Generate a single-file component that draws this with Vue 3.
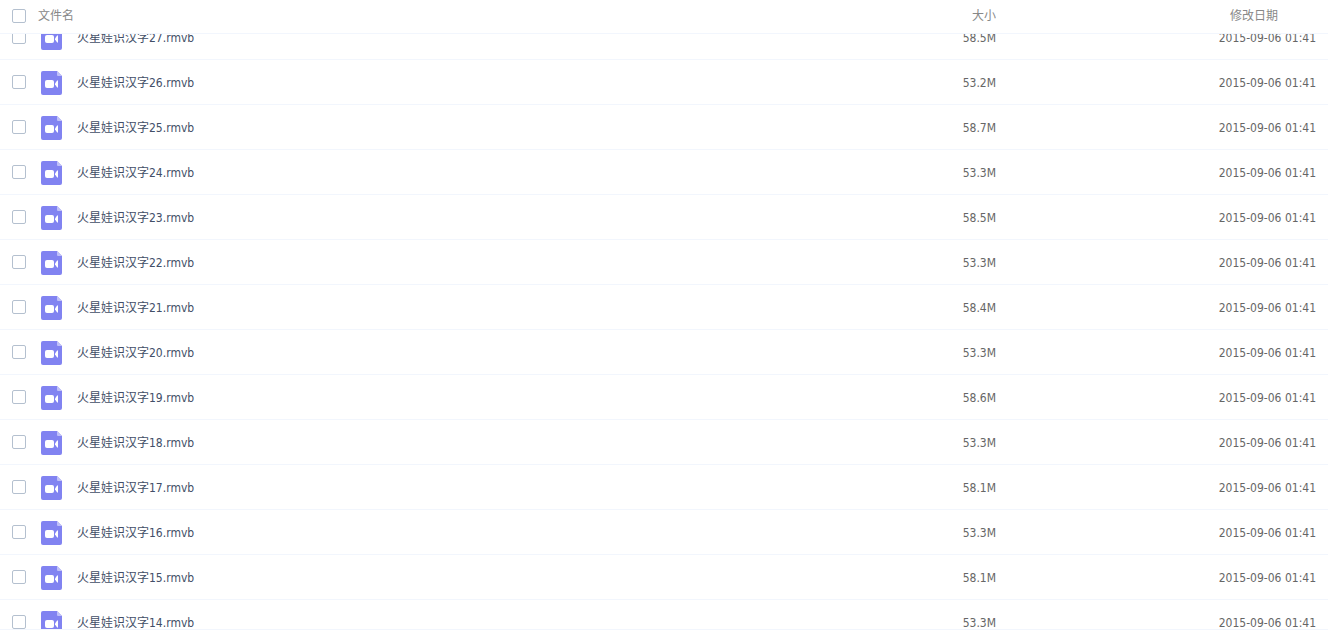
<script setup>
import { onMounted, ref } from 'vue'

const sizes = [
  [27, '58.5M'],
  [26, '53.2M'],
  [25, '58.7M'],
  [24, '53.3M'],
  [23, '58.5M'],
  [22, '53.3M'],
  [21, '58.4M'],
  [20, '53.3M'],
  [19, '58.6M'],
  [18, '53.3M'],
  [17, '58.1M'],
  [16, '53.3M'],
  [15, '58.1M'],
  [14, '53.3M'],
]

const files = sizes.map(([n, size]) => ({
  name: `火星娃识汉字${n}.rmvb`,
  size,
  date: '2015-09-06 01:41',
}))

const selected = ref([])
const scroller = ref(null)

function toggleAll(event) {
  selected.value = event.target.checked ? files.map((f) => f.name) : []
}

onMounted(() => {
  scroller.value.scrollTop = 19
})
</script>

<template>
  <main ref="scroller" class="file-list">
    <table class="files">
      <thead>
        <tr>
          <th class="col-check">
            <input
              type="checkbox"
              class="check"
              aria-label="全选"
              :checked="selected.length === files.length"
              @change="toggleAll"
            />
          </th>
          <th class="col-name" scope="col">文件名</th>
          <th class="col-size" scope="col">大小</th>
          <th class="col-date" scope="col">修改日期</th>
        </tr>
      </thead>
      <tbody>
        <tr v-for="file in files" :key="file.name">
          <td class="col-check">
            <input
              v-model="selected"
              type="checkbox"
              class="check"
              :value="file.name"
              :aria-label="file.name"
            />
          </td>
          <td class="col-name">
            <div class="entry">
              <svg class="icon" viewBox="0 0 21 24" aria-hidden="true">
                <path d="M2 0h14l5 5v17a2 2 0 0 1-2 2H2a2 2 0 0 1-2-2V2a2 2 0 0 1 2-2z" fill="#8183f1" />
                <path d="M16 0l5 5h-4a1 1 0 0 1-1-1z" fill="#c0c1f8" />
                <rect x="4" y="9" width="9" height="8" rx="2" fill="#fff" />
                <path d="M14 12.4l2-2.6q1-1 1 .2v6q0 1.200-1 .2l-2-2.600z" fill="#fff" />
              </svg>
              <a href="#" @click.prevent>{{ file.name }}</a>
            </div>
          </td>
          <td class="col-size">{{ file.size }}</td>
          <td class="col-date">{{ file.date }}</td>
        </tr>
      </tbody>
    </table>
  </main>
</template>

<style>
body {
  margin: 0;
  background: #fff;
}
</style>

<style scoped>
.file-list {
  box-sizing: border-box;
  height: 100vh;
  overflow-y: auto;
  scrollbar-width: none;
  border-bottom: 1px solid #f2f6fd;
  background: #fff;
  color: #666;
  font: 12px/16px 'DejaVu Sans Condensed', 'Noto Sans CJK SC', sans-serif;
}

.files {
  width: 100%;
  table-layout: fixed;
  border-collapse: separate;
  border-spacing: 0;
}

th {
  position: sticky;
  top: 0;
  z-index: 1;
  box-sizing: border-box;
  height: 34px;
  padding: 0 0 2px;
  border-bottom: 1px solid #f2f6fd;
  background: #fff;
  color: #888;
  font-weight: 400;
  text-align: left;
}

td {
  box-sizing: border-box;
  height: 45px;
  padding: 2px 0 0;
  border-bottom: 1px solid #f2f6fd;
}

.col-check {
  width: 38px;
}

td.col-check {
  padding-top: 0;
}

.col-size {
  width: 100px;
  text-align: right;
}

.col-date {
  width: 332px;
  padding-right: 12px;
  text-align: right;
}

th.col-date {
  padding-right: 50px;
}

.check {
  display: block;
  box-sizing: border-box;
  width: 14px;
  height: 14px;
  margin: 0 0 0 12px;
  appearance: none;
  border: 1px solid #b4c0cf;
  border-radius: 2px;
  background: #fff;
}

.check:checked {
  border-color: #8183f1;
  background: #8183f1;
}

.entry {
  display: flex;
  align-items: center;
  gap: 15px;
  padding-left: 3px;
}

.icon {
  flex: none;
  width: 21px;
  height: 24px;
}

a {
  color: #424e67;
  text-decoration: none;
}
</style>
